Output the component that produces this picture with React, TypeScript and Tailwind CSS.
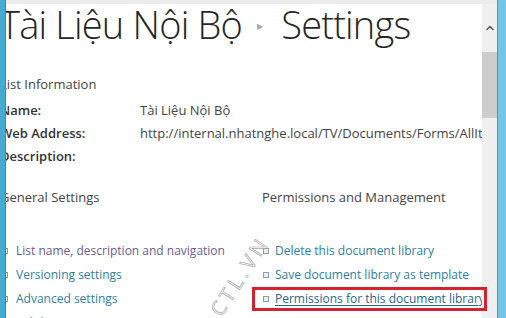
import { ChevronUp } from 'lucide-react'

const leftLinks = [
  { label: 'List name, description and navigation', visited: true },
  { label: 'Versioning settings' },
  { label: 'Advanced settings' },
  { label: 'Validation settings' },
]

const rightLinks = [
  { label: 'Delete this document library' },
  { label: 'Save document library as template' },
  { label: 'Permissions for this document library', active: true },
]

function Bullet() {
  return <span className="h-[6px] w-[6px] shrink-0 border border-[#8c9ca8] bg-[#e9eef1]" />
}

function LinkRow({ label, visited, active, tight }: { label: string; visited?: boolean; active?: boolean; tight?: boolean }) {
  return (
    <div className={`flex h-[24px] items-center whitespace-nowrap text-[12px] ${tight ? 'gap-[6px]' : 'gap-[8px]'}`}>
      <Bullet />
      <span
        className={
          visited
            ? 'text-[#6b5c8e]'
            : active
              ? 'text-[#1f6690] underline decoration-[1px] underline-offset-2'
              : 'text-[#2a7fa3]'
        }
      >
        {label}
      </span>
    </div>
  )
}

export default function App() {
  return (
    <div
      className="relative flex h-[318px] w-[506px] overflow-hidden bg-white text-[13px] text-[#444]"
      style={{ fontFamily: '"Open Sans", "Noto Sans", sans-serif' }}
    >
      {/* left window edge */}
      <div className="z-10 w-[6px] shrink-0 border-r border-[#2e8bb2] bg-[#46aad1]" />

      <div className="flex min-w-0 flex-1 flex-col">
        <div className="h-[4px] shrink-0 bg-[#ececec]" />
        <div className="flex min-h-0 flex-1">
          <main className="min-w-0 flex-1 overflow-hidden">
            <div className="-ml-[6px] w-[560px]">
              <h1 className="-mt-[4px] flex h-[48px] items-center whitespace-nowrap text-[38px] font-light tracking-[-0.8px] text-[#262626]">
                <span>Tài Liệu Nội Bộ</span>
                <span className="ml-[15px] mr-[19px] mt-[4px] text-[8px] text-[#a8a8a8]">▶</span>
                <span>Settings</span>
              </h1>

              <div className="mt-[25px] leading-[22px]">List Information</div>
              <div className="mt-[4px] grid grid-cols-[140px_1fr] leading-[23px]">
                <span className="font-semibold text-[#333]">Name:</span>
                <span>Tài Liệu Nội Bộ</span>
                <span className="font-semibold text-[#333]">Web Address:</span>
                <span className="whitespace-nowrap">http://internal.nhatnghe.local/TV/Documents/Forms/AllItems.aspx</span>
                <span className="font-semibold text-[#333]">Description:</span>
                <span />
              </div>

              <div className="mt-[18px] grid grid-cols-[262px_1fr]">
                <div>
                  <div className="leading-[22px]">General Settings</div>
                  <div className="mt-[31px] pl-[2px]">
                    {leftLinks.map((l) => (
                      <LinkRow key={l.label} {...l} />
                    ))}
                  </div>
                </div>
                <div>
                  <div className="leading-[22px]">Permissions and Management</div>
                  <div className="mt-[31px] pl-[1px]">
                    {rightLinks.map((l) => (
                      <LinkRow key={l.label} {...l} tight />
                    ))}
                  </div>
                </div>
              </div>
            </div>
          </main>

          {/* scrollbar */}
          <div className="flex w-[15px] shrink-0 flex-col bg-[#f0f0f0]">
            <div className="flex h-[48px] items-center justify-center text-[#555]">
              <ChevronUp size={12} strokeWidth={3} />
            </div>
            <div className="h-[66px] bg-[#cdcdcd]" />
          </div>
        </div>
      </div>

      {/* right window edge */}
      <div className="w-[9px] shrink-0 border-l border-[#3b9dc5] bg-[#73c6e4]" />

      {/* highlight annotation */}
      <div className="pointer-events-none absolute left-[252px] top-[287px] h-[24px] w-[235px] border-[3px] border-[#d2232e]" />

      {/* watermark */}
      <div className="pointer-events-none absolute left-[240px] top-[276px] -translate-x-1/2 -translate-y-1/2 -rotate-[57deg] whitespace-nowrap text-[20px] tracking-[4px] text-transparent [-webkit-text-stroke:0.7px_#a9a9a9]">
        CTL.VN
      </div>
    </div>
  )
}
